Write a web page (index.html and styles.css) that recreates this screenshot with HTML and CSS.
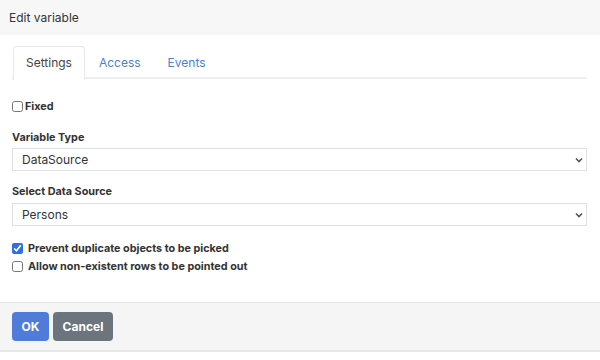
FILE: index.html
```html
<!DOCTYPE html>
<html>
<head>
<meta charset="utf-8">
<link rel="stylesheet" href="styles.css">
</head>
<body>
<div class="header">Edit variable</div>
<div class="content">
  <div class="tabs">
    <div class="tab active">Settings</div>
    <div class="tab">Access</div>
    <div class="tab">Events</div>
  </div>
  <label class="check row-fixed"><input type="checkbox"><span>Fixed</span></label>
  <div class="label l1">Variable Type</div>
  <div class="select-wrap s1">
    <select class="select"><option>DataSource</option></select>
    <svg class="chev" width="8" height="6" viewBox="0 0 8 6"><path d="M1 1.5 L4 4.5 L7 1.5" fill="none" stroke="#555" stroke-width="1.6"/></svg>
  </div>
  <div class="label l2">Select Data Source</div>
  <div class="select-wrap s2">
    <select class="select"><option>Persons</option></select>
    <svg class="chev" width="8" height="6" viewBox="0 0 8 6"><path d="M1 1.5 L4 4.5 L7 1.5" fill="none" stroke="#555" stroke-width="1.6"/></svg>
  </div>
  <label class="check c1"><input type="checkbox" checked><span>Prevent duplicate objects to be picked</span></label>
  <label class="check c2"><input type="checkbox"><span>Allow non-existent rows to be pointed out</span></label>
</div>
<div class="footer">
  <button class="btn ok">OK</button>
  <button class="btn cancel">Cancel</button>
</div>
</body>
</html>
```
FILE: styles.css
```css
* { box-sizing: border-box; }
body {
  margin: 0;
  font-family: Inter, "Noto Sans", sans-serif;
  color: #333;
  background: #fff;
}
.header {
  height: 35px;
  line-height: 35px;
  background: #f7f7f7;
  padding-left: 9px;
  font-size: 12px;
  color: #333;
}
.content {
  padding: 0 13px 0 12px;
}
.tabs {
  margin-top: 11px;
  height: 33px;
  display: flex;
  border-bottom: 2px solid #eeeeee;
  padding-left: 1px;
}
.tab {
  height: 33px;
  line-height: 31px;
  padding: 0 12px;
  font-size: 12px;
  color: #4a7fd6;
  border: 1px solid transparent;
  border-bottom: none;
  margin-right: 1px;
}
.tab.active {
  color: #444;
  background: #fff;
  border-color: #e8e8e8;
  border-radius: 4px 4px 0 0;
  margin-bottom: -2px;
  height: 34px;
}
.check {
  display: flex;
  align-items: center;
  height: 14px;
  font-size: 10.8px;
  font-weight: 700;
  color: #333;
}
.check input {
  width: 11px;
  height: 11px;
  margin: 0 2px 0 0;
  accent-color: #2f6fe0;
}
.row-fixed { margin-top: 20px; }
.c1 { margin-top: 15px; }
.c2 { margin-top: 4px; }
.c1 input, .c2 input { margin-right: 5px; }
.label {
  height: 14px;
  line-height: 14px;
  font-size: 10.8px;
  font-weight: 700;
  color: #333;
}
.l1 { margin-top: 18px; }
.l2 { margin-top: 14px; }
.select-wrap {
  position: relative;
  height: 23px;
}
.s1 { margin-top: 3px; }
.s2 { margin-top: 4px; }
.select {
  appearance: none;
  -webkit-appearance: none;
  width: 100%;
  height: 23px;
  margin: 0;
  border: 1px solid #dfe2e5;
  border-radius: 0;
  background: #fff;
  font-family: Inter, "Noto Sans", sans-serif;
  font-size: 12px;
  color: #333;
  padding: 0 9px;
}
.chev {
  position: absolute;
  right: 4px;
  top: 9px;
}
.footer {
  margin-top: 29px;
  border-top: 1px solid #e4e4e4;
  border-bottom: 2px solid #e6e8e8;
  background: #f5f5f5;
  padding: 9px 12px 9px;
  display: flex;
  gap: 4px;
}
.btn {
  height: 29px;
  border: none;
  border-radius: 4px;
  font-family: Inter, "Noto Sans", sans-serif;
  font-size: 12px;
  font-weight: 700;
  color: #fff;
  padding: 0;
}
.ok { width: 37px; background: #4f7bd9; }
.cancel { width: 60px; background: #6c757d; }
```
